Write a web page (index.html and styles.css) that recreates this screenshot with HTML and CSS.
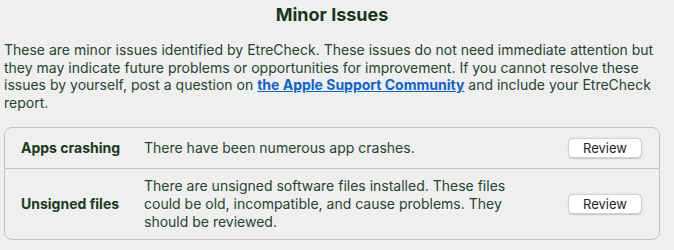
FILE: index.html
```html
<!DOCTYPE html>
<html>
<head>
<meta charset="utf-8">
<link rel="stylesheet" href="styles.css">
</head>
<body>
<div class="page">
  <h1 class="title">Minor Issues</h1>
  <p class="intro">These are minor issues identified by EtreCheck. These issues do not need immediate attention but they may indicate future problems or opportunities for improvement. If you cannot resolve these issues by yourself, post a question on <a class="link" href="#">the Apple Support Community</a> and include your EtreCheck report.</p>
  <div class="box">
    <div class="row row-one">
      <div class="label">Apps crashing</div>
      <div class="desc">There have been numerous app crashes.</div>
      <div class="action"><button class="btn">Review</button></div>
    </div>
    <div class="row">
      <div class="label">Unsigned files</div>
      <div class="desc">There are unsigned software files installed. These files could be old, incompatible, and cause problems. They should be reviewed.</div>
      <div class="action"><button class="btn">Review</button></div>
    </div>
  </div>
</div>
</body>
</html>
```
FILE: styles.css
```css
html, body {
  margin: 0;
  padding: 0;
  background: #efefef;
}
body {
  font-family: Inter, "Noto Sans", "Liberation Sans", sans-serif;
  color: #1f4424;
}
.page {
  padding: 4px 14px 0 4px;
}
.title {
  margin: 0;
  text-align: center;
  font-size: 18px;
  line-height: 22px;
  font-weight: 700;
  color: #123a17;
}
.intro {
  margin: 15px 0 0 0;
  font-size: 14px;
  line-height: 17.5px;
  color: #22472a;
}
.link {
  color: #0b63d8;
  font-weight: 700;
  text-decoration: underline;
}
.box {
  margin-top: 16px;
  border: 1px solid #c2c2c2;
  border-radius: 8px;
}
.row {
  display: grid;
  grid-template-columns: 123px 376px 1fr;
  align-items: center;
  padding: 8px 17px 8px 16px;
  font-size: 14px;
  line-height: 18px;
}
.row-one {
  min-height: 24px;
  border-bottom: 1px solid #c2c2c2;
}
.label {
  font-weight: 700;
  color: #163d1b;
}
.desc {
  color: #22472a;
}
.action {
  display: flex;
  justify-content: flex-end;
}
.btn {
  width: 74px;
  height: 20px;
  padding: 0;
  font-family: Inter, "Noto Sans", "Liberation Sans", sans-serif;
  font-size: 13px;
  line-height: 18px;
  color: #262626;
  background: #ffffff;
  border: 0.5px solid #d0d0d0;
  border-radius: 5px;
  box-shadow: 0 0.5px 1.5px rgba(0,0,0,0.18);
}
```
